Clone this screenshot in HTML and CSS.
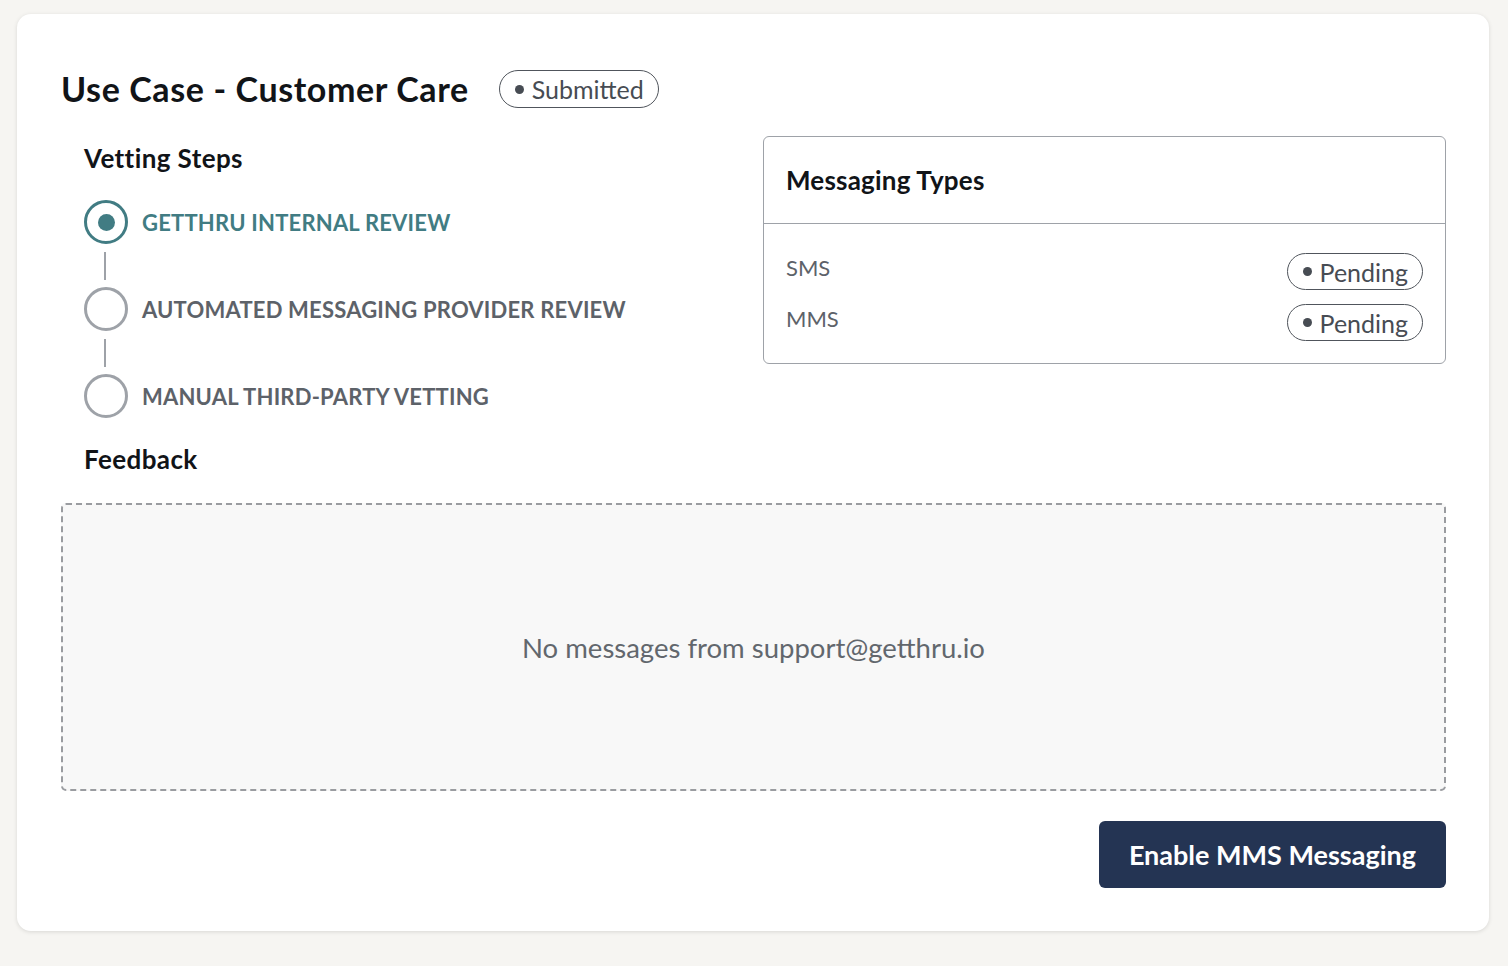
FILE: index.html
```html
<!DOCTYPE html>
<html>

<head>
    <meta charset='UTF-8'>
    <title>Use Case - Customer Care</title>
    <link rel="stylesheet" href="styles.css">
</head>

<body>
    <div class='card'>
        <div class='title-row'>
            <h1 class='title'>Use Case - Customer Care</h1>
            <span class='badge badge-lg'><span class='badge-dot'></span>Submitted</span>
        </div>

        <div class='columns'>
            <!-- Vetting steps -->
            <div class='steps-col'>
                <h2 class='section-title'>Vetting Steps</h2>
                <ul class='steps'>
                    <li class='step active'>
                        <span class='step-circle'></span>
                        <span class='step-label'>GETTHRU INTERNAL REVIEW</span>
                    </li>
                    <li class='step-line'></li>
                    <li class='step'>
                        <span class='step-circle'></span>
                        <span class='step-label'>AUTOMATED MESSAGING PROVIDER REVIEW</span>
                    </li>
                    <li class='step-line'></li>
                    <li class='step'>
                        <span class='step-circle'></span>
                        <span class='step-label'>MANUAL THIRD-PARTY VETTING</span>
                    </li>
                </ul>
                <h2 class='section-title feedback-title'>Feedback</h2>
            </div>

            <!-- Messaging types -->
            <div class='types-box'>
                <div class='types-header'>Messaging Types</div>
                <div class='types-body'>
                    <div class='type-row'>
                        <span class='type-name'>SMS</span>
                        <span class='badge'><span class='badge-dot'></span>Pending</span>
                    </div>
                    <div class='type-row'>
                        <span class='type-name'>MMS</span>
                        <span class='badge'><span class='badge-dot'></span>Pending</span>
                    </div>
                </div>
            </div>
        </div>

        <div class='feedback-box'>No messages from support@getthru.io</div>

        <div class='actions'>
            <button class='primary-btn'>Enable MMS Messaging</button>
        </div>
    </div>
</body>

</html>
```

FILE: styles.css
```css
:root {
    --text-dark: #111418;
    --text-muted: #5d6269;
    --teal: #417c83;
    --border-gray: #9ea2a8;
    --navy: #243453;
}

body {
    font-family: Lato, "Noto Sans", sans-serif;
    margin: 0;
    padding: 14px 19px 35px 17px;
    background-color: #f6f5f2;
}

.card {
    background: #ffffff;
    border-radius: 14px;
    box-shadow: 0 1px 4px rgba(0, 0, 0, 0.12);
    padding: 54px 43px 43px 44px;
}

.title-row {
    display: flex;
    align-items: center;
    gap: 30px;
    height: 42px;
}

.title {
    margin: 0;
    font-size: 34px;
    font-weight: 700;
    letter-spacing: 0.6px;
    color: var(--text-dark);
    line-height: 42px;
}

.badge {
    display: inline-flex;
    align-items: center;
    gap: 8px;
    height: 35px;
    padding: 0 14px 0 15px;
    border: 1px solid #50555c;
    border-radius: 20px;
    font-size: 25px;
    color: #474c53;
}

.badge-lg {
    height: 36px;
}

.badge-dot {
    width: 9px;
    height: 9px;
    border-radius: 50%;
    background: #474c53;
}

.columns {
    display: grid;
    grid-template-columns: 1fr 683px;
    gap: 20px;
    margin-top: 30px;
}

.steps-col {
    padding-left: 23px;
}

.section-title {
    margin: 0;
    font-size: 26px;
    font-weight: 700;
    letter-spacing: 0.4px;
    color: var(--text-dark);
    line-height: 36px;
}

.steps {
    list-style: none;
    margin: 24px 0 0 0;
    padding: 0;
}

.step {
    display: flex;
    align-items: center;
    gap: 14px;
}

.step-circle {
    box-sizing: border-box;
    width: 44px;
    height: 44px;
    border-radius: 50%;
    border: 3px solid var(--border-gray);
    display: flex;
    align-items: center;
    justify-content: center;
    flex-shrink: 0;
}

.step-label {
    font-size: 22px;
    font-weight: 700;
    letter-spacing: 0.2px;
    color: var(--text-muted);
}

.step.active .step-circle {
    border-color: var(--teal);
}

.step.active .step-circle::after {
    content: '';
    width: 17px;
    height: 17px;
    border-radius: 50%;
    background: var(--teal);
}

.step.active .step-label {
    color: var(--teal);
}

.step-line {
    width: 2px;
    height: 28px;
    margin: 8px 0 7px 20px;
    background: var(--border-gray);
}

.feedback-title {
    margin-top: 23px;
}

.types-box {
    border: 1px solid var(--border-gray);
    border-radius: 6px;
    align-self: start;
    margin-top: -4px;
}

.types-header {
    padding: 0 22px;
    height: 86px;
    display: flex;
    align-items: center;
    font-size: 26px;
    font-weight: 700;
    letter-spacing: 0.2px;
    color: var(--text-dark);
    border-bottom: 1px solid var(--border-gray);
}

.types-body {
    padding: 29px 22px 22px 22px;
    display: flex;
    flex-direction: column;
    gap: 14px;
}

.type-row {
    display: flex;
    justify-content: space-between;
    align-items: center;
    height: 37px;
}

.type-name {
    font-size: 22px;
    color: var(--text-muted);
    margin-top: -8px;
}

.feedback-box {
    margin-top: 26px;
    height: 284px;
    border: 2px dashed #9a9ca0;
    border-radius: 5px;
    background: #f8f8f8;
    display: flex;
    align-items: center;
    justify-content: center;
    font-size: 27.5px;
    color: #62676d;
}

.actions {
    display: flex;
    justify-content: flex-end;
    margin-top: 30px;
}

.primary-btn {
    background-color: var(--navy);
    color: #ffffff;
    border: none;
    border-radius: 6px;
    height: 67px;
    padding: 0 30px;
    font-family: inherit;
    font-size: 27px;
    font-weight: 700;
    cursor: pointer;
}
```
